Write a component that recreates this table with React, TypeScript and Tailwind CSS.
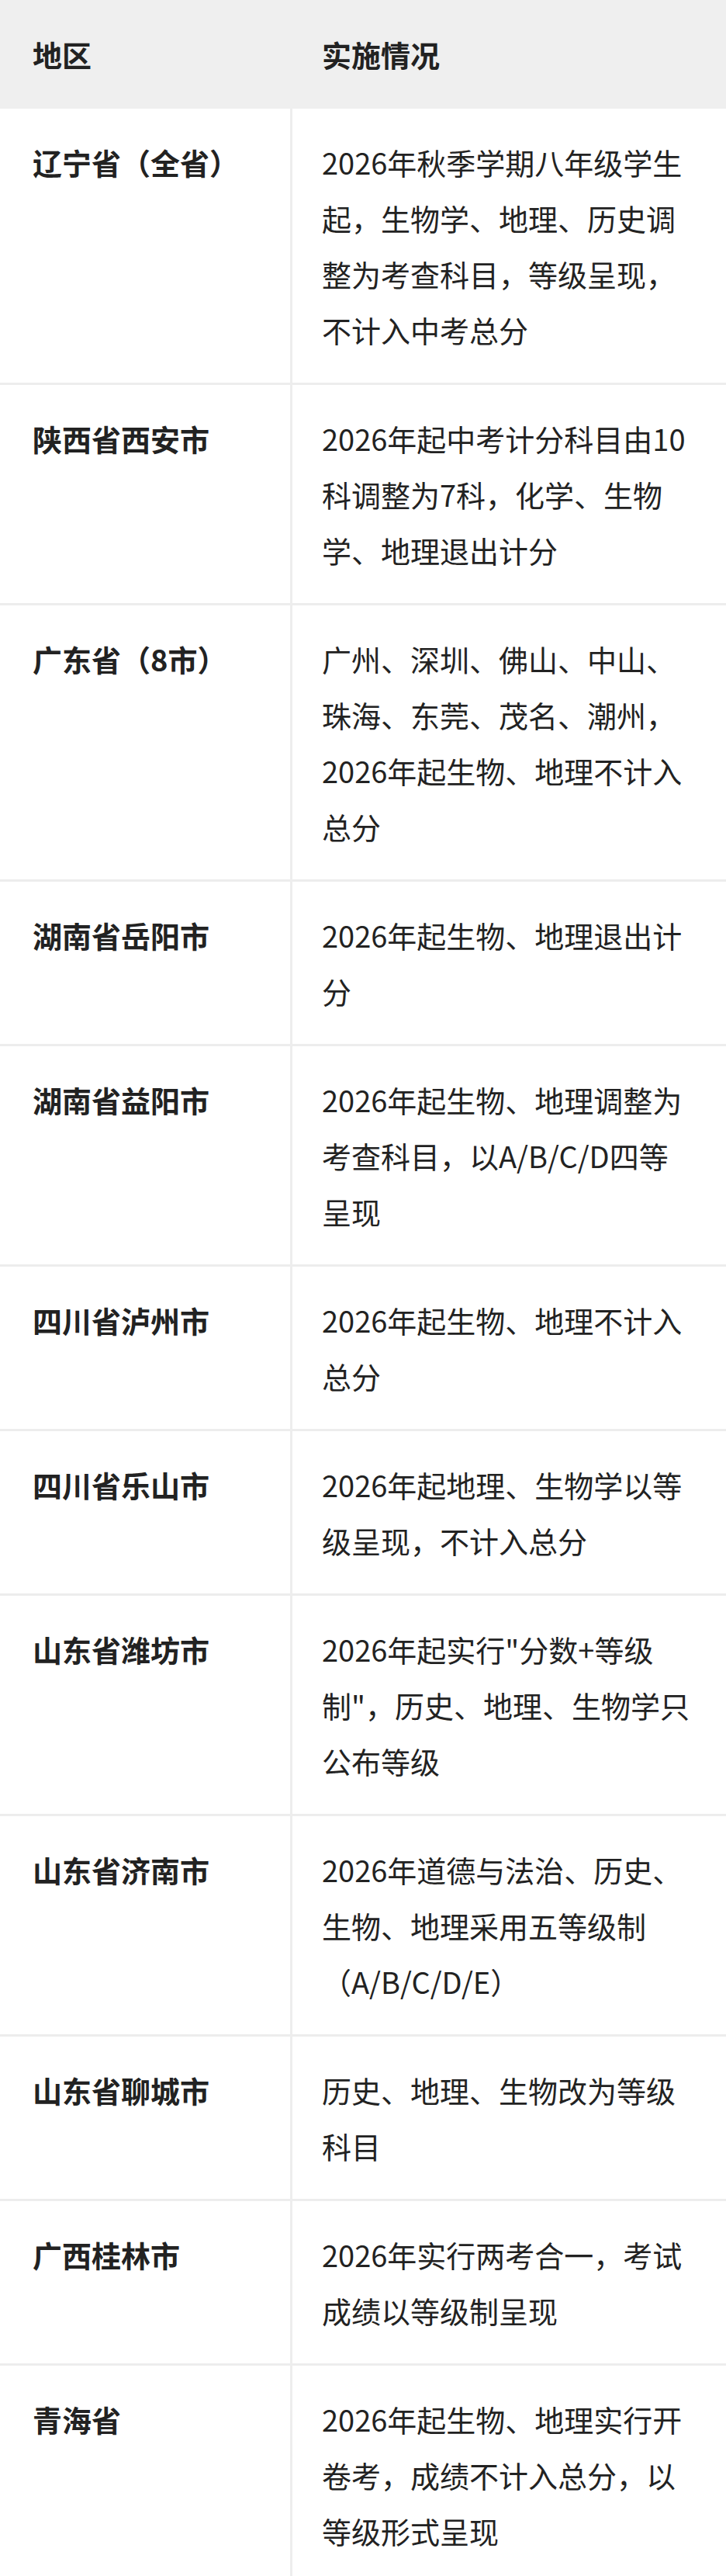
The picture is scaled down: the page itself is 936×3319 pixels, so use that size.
const rows: [string, string][] = [
  ["辽宁省（全省）", "2026年秋季学期八年级学生起，生物学、地理、历史调整为考查科目，等级呈现，不计入中考总分"],
  ["陕西省西安市", "2026年起中考计分科目由10科调整为7科，化学、生物学、地理退出计分"],
  ["广东省（8市）", "广州、深圳、佛山、中山、珠海、东莞、茂名、潮州，2026年起生物、地理不计入总分"],
  ["湖南省岳阳市", "2026年起生物、地理退出计分"],
  ["湖南省益阳市", "2026年起生物、地理调整为考查科目，以A/B/C/D四等呈现"],
  ["四川省泸州市", "2026年起生物、地理不计入总分"],
  ["四川省乐山市", "2026年起地理、生物学以等级呈现，不计入总分"],
  ["山东省潍坊市", "2026年起实行\"分数+等级制\"，历史、地理、生物学只公布等级"],
  ["山东省济南市", "2026年道德与法治、历史、生物、地理采用五等级制（A/B/C/D/E）"],
  ["山东省聊城市", "历史、地理、生物改为等级科目"],
  ["广西桂林市", "2026年实行两考合一，考试成绩以等级制呈现"],
  ["青海省", "2026年起生物、地理实行开卷考，成绩不计入总分，以等级形式呈现"],
];

export default function App() {
  return (
    <div
      className="w-[936px] bg-white text-[#222222] text-[38px] leading-[72px]"
      style={{ fontFamily: '"Noto Sans CJK SC", "Noto Sans", sans-serif' }}
    >
      {/* header */}
      <div className="grid grid-cols-[377px_1fr] h-[140px] items-center bg-[#efefef] font-semibold">
        <div className="pl-[42px]">地区</div>
        <div className="pl-[38px]">实施情况</div>
      </div>

      {rows.map(([region, detail], i) => (
        <div
          key={region}
          className={
            i < rows.length - 1
              ? "grid grid-cols-[377px_1fr] border-b-[3px] border-[#ededed]"
              : "grid grid-cols-[377px_1fr]"
          }
        >
          <div className="border-r-[3px] border-[#ededed] pl-[42px] pr-[20px] pt-[33px] pb-[32px] font-semibold">
            {region}
          </div>
          <div className="pl-[38px] pr-[38px] pt-[33px] pb-[32px]">{detail}</div>
        </div>
      ))}
    </div>
  );
}
